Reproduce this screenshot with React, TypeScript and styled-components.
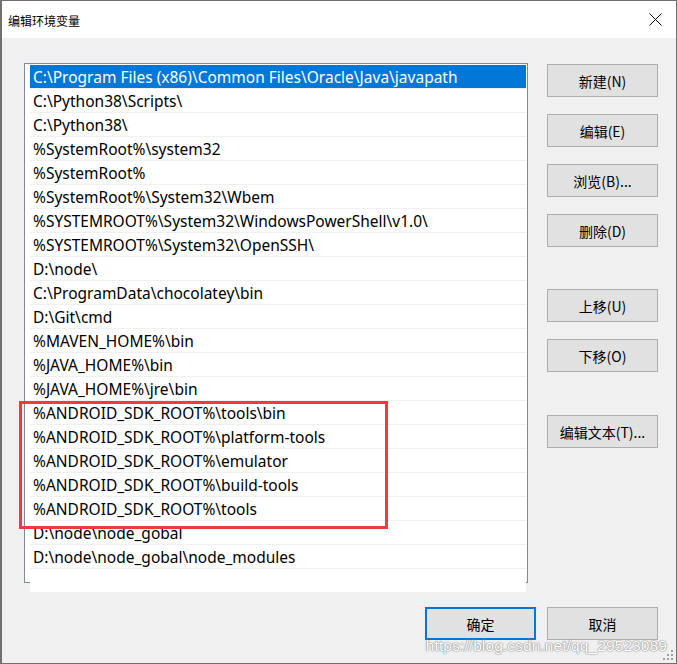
import * as React from "react";
import styled, { createGlobalStyle } from "styled-components";

const GlobalStyle = createGlobalStyle`
  html, body {
    margin: 0;
    padding: 0;
    background: #f0f0f0;
  }
  * {
    box-sizing: border-box;
  }
`;

const Window = styled.div`
  position: relative;
  width: 677px;
  height: 664px;
  display: flex;
  flex-direction: column;
  background: #f0f0f0;
  border: 1px solid #707070;
  border-left-width: 2px;
  font-family: "Noto Sans", "Noto Sans CJK SC", sans-serif;
  color: #000;
  overflow: hidden;
`;

const TitleBar = styled.div`
  height: 37px;
  flex-shrink: 0;
  display: flex;
  align-items: center;
  justify-content: space-between;
  background: #fff;
  padding: 0 14px 0 6px;
`;

const Title = styled.span`
  font-family: "Noto Sans CJK SC", sans-serif;
  font-size: 12px;
  margin-top: 1px;
`;

const Body = styled.div`
  display: flex;
  gap: 19px;
  padding: 25px 18px 0 22px;
`;

const ListBox = styled.div`
  width: 504px;
  height: 520px;
  flex-shrink: 0;
  background: #fff;
  border: 1px solid #828790;
  padding: 1px 1px 0 5px;
`;

const Row = styled.div<{ selected?: boolean }>`
  height: 24px;
  display: flex;
  align-items: center;
  padding-left: 3px;
  font-size: 15.5px;
  white-space: nowrap;
  background: ${(p) => (p.selected ? "#0078d7" : "#fff")};
  color: ${(p) => (p.selected ? "#fff" : "#000")};
  border-bottom: 1px solid #f0f0f0;
`;

const Highlight = styled.div`
  position: absolute;
  left: 17px;
  top: 400px;
  width: 369px;
  height: 128px;
  border: 3px solid #f33a3a;
  pointer-events: none;
`;

const ButtonColumn = styled.div`
  display: flex;
  flex-direction: column;
  gap: 17px;
  padding-top: 1px;
`;

const Button = styled.button<{ primary?: boolean; push?: number }>`
  width: 111px;
  height: 33px;
  flex-shrink: 0;
  margin-top: ${(p) => p.push ?? 0}px;
  background: #e1e1e1;
  border: ${(p) => (p.primary ? "2px solid #0078d7" : "1px solid #adadad")};
  font-family: "Noto Sans CJK SC", sans-serif;
  font-size: 14px;
  color: #000;
  padding: 0;
  display: flex;
  align-items: center;
  justify-content: center;
`;

const Footer = styled.div`
  display: flex;
  justify-content: flex-end;
  gap: 11px;
  padding: 24px 18px 0 0;
`;

const CloseIcon = styled.svg`
  width: 13px;
  height: 13px;
  display: block;
`;

const Watermark = styled.div`
  position: absolute;
  right: 9px;
  bottom: 8px;
  font-family: "Liberation Sans", Arial, sans-serif;
  font-size: 15.5px;
  color: #fff;
  text-shadow: 0 0 1px #888, 0 0 1px #888, 0 0 2px #aaa;
  letter-spacing: 0.1px;
  pointer-events: none;
`;

const Grip = styled.svg`
  position: absolute;
  right: 2px;
  bottom: 2px;
  width: 11px;
  height: 11px;
`;

const paths = [
  "C:\\Program Files (x86)\\Common Files\\Oracle\\Java\\javapath",
  "C:\\Python38\\Scripts\\",
  "C:\\Python38\\",
  "%SystemRoot%\\system32",
  "%SystemRoot%",
  "%SystemRoot%\\System32\\Wbem",
  "%SYSTEMROOT%\\System32\\WindowsPowerShell\\v1.0\\",
  "%SYSTEMROOT%\\System32\\OpenSSH\\",
  "D:\\node\\",
  "C:\\ProgramData\\chocolatey\\bin",
  "D:\\Git\\cmd",
  "%MAVEN_HOME%\\bin",
  "%JAVA_HOME%\\bin",
  "%JAVA_HOME%\\jre\\bin",
  "%ANDROID_SDK_ROOT%\\tools\\bin",
  "%ANDROID_SDK_ROOT%\\platform-tools",
  "%ANDROID_SDK_ROOT%\\emulator",
  "%ANDROID_SDK_ROOT%\\build-tools",
  "%ANDROID_SDK_ROOT%\\tools",
  "D:\\node\\node_gobal",
  "D:\\node\\node_gobal\\node_modules",
  "",
];

const App = () => {
  return (
    <Window>
      <GlobalStyle />
      <TitleBar>
        <Title>编辑环境变量</Title>
        <CloseIcon viewBox="0 0 13 13">
          <path d="M0.5 0.5 L12.5 12.5 M12.5 0.5 L0.5 12.5" stroke="#000" strokeWidth="1" />
        </CloseIcon>
      </TitleBar>

      <Body>
        <ListBox>
          {paths.map((p, i) => (
            <Row key={i} selected={i === 0}>
              {p}
            </Row>
          ))}
        </ListBox>

        <ButtonColumn>
          <Button>新建(N)</Button>
          <Button>编辑(E)</Button>
          <Button>浏览(B)...</Button>
          <Button>删除(D)</Button>
          <Button push={25}>上移(U)</Button>
          <Button>下移(O)</Button>
          <Button push={26}>编辑文本(T)...</Button>
        </ButtonColumn>
      </Body>

      <Footer>
        <Button primary>确定</Button>
        <Button>取消</Button>
      </Footer>

      <Highlight />
      <Watermark>https://blog.csdn.net/qq_29523089</Watermark>
      <Grip viewBox="0 0 11 11">
        {[
          [8, 0],
          [8, 4],
          [4, 4],
          [8, 8],
          [4, 8],
          [0, 8],
        ].map(([x, y], i) => (
          <rect key={i} x={x} y={y} width="2" height="2" fill="#a0a0a0" />
        ))}
      </Grip>
    </Window>
  );
};

export default App;
